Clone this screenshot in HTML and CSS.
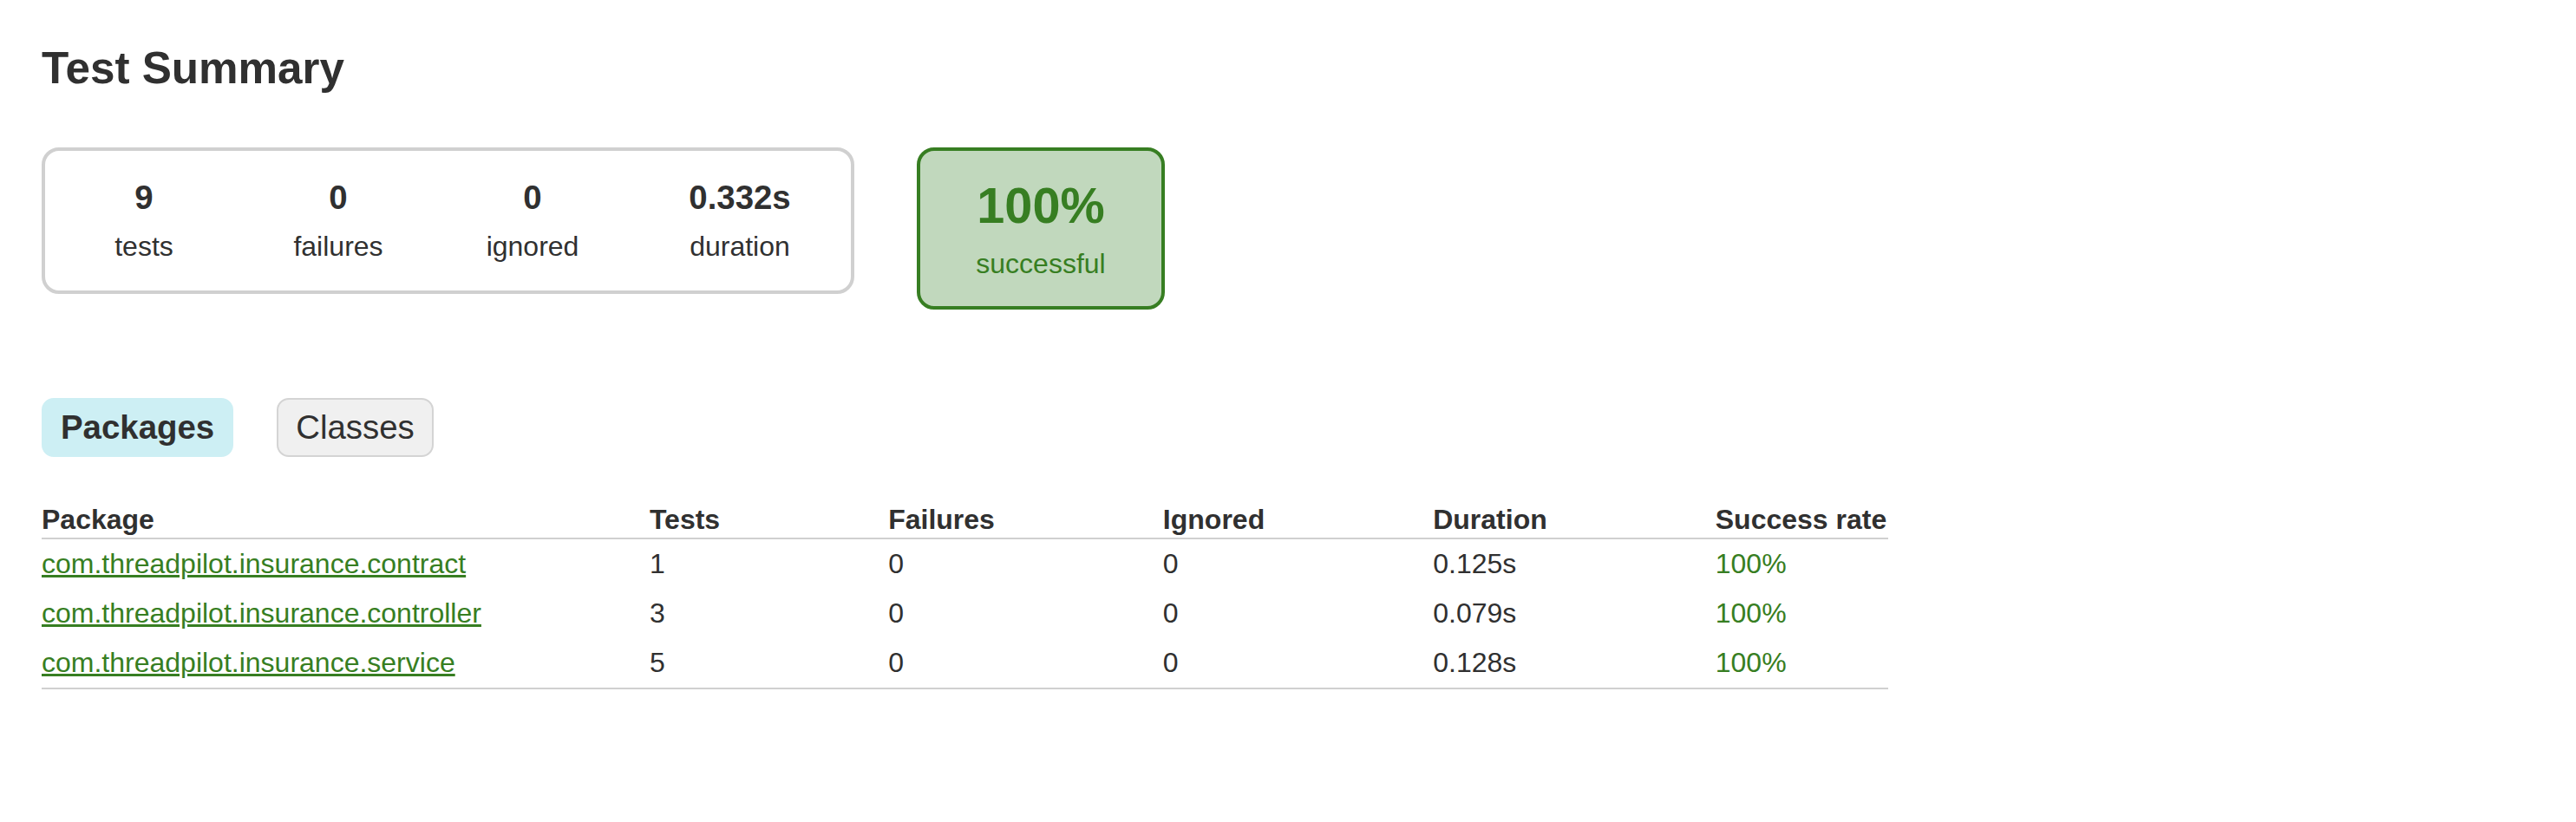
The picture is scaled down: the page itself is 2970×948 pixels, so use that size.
FILE: index.html
```html
<!DOCTYPE html>
<html lang="en">
<head>
<meta charset="utf-8">
<title>Test results - Test Summary</title>
<link rel="stylesheet" href="styles.css">
</head>
<body>
<div class="content">
  <h1 class="title">Test Summary</h1>
  <div class="summary">
    <div class="summary-group">
      <div class="info-box">
        <div class="counter">9</div>
        <p class="label">tests</p>
      </div>
      <div class="info-box">
        <div class="counter">0</div>
        <p class="label">failures</p>
      </div>
      <div class="info-box">
        <div class="counter">0</div>
        <p class="label">ignored</p>
      </div>
      <div class="info-box info-box-duration">
        <div class="counter">0.332s</div>
        <p class="label">duration</p>
      </div>
    </div>
    <div class="success-rate">
      <div class="percent">100%</div>
      <p class="label">successful</p>
    </div>
  </div>
  <ul class="tab-links">
    <li class="tab-link tab-link-selected"><a class="tab-anchor" href="#tab0">Packages</a></li>
    <li class="tab-link"><a class="tab-anchor" href="#tab1">Classes</a></li>
  </ul>
  <table class="results">
    <thead>
      <tr>
        <th class="col-head">Package</th>
        <th class="col-head">Tests</th>
        <th class="col-head">Failures</th>
        <th class="col-head">Ignored</th>
        <th class="col-head">Duration</th>
        <th class="col-head">Success rate</th>
      </tr>
    </thead>
    <tbody>
      <tr>
        <td class="cell success"><a class="pkg-link" href="#">com.threadpilot.insurance.contract</a></td>
        <td class="cell">1</td>
        <td class="cell">0</td>
        <td class="cell">0</td>
        <td class="cell">0.125s</td>
        <td class="cell success">100%</td>
      </tr>
      <tr>
        <td class="cell success"><a class="pkg-link" href="#">com.threadpilot.insurance.controller</a></td>
        <td class="cell">3</td>
        <td class="cell">0</td>
        <td class="cell">0</td>
        <td class="cell">0.079s</td>
        <td class="cell success">100%</td>
      </tr>
      <tr>
        <td class="cell success"><a class="pkg-link" href="#">com.threadpilot.insurance.service</a></td>
        <td class="cell">5</td>
        <td class="cell">0</td>
        <td class="cell">0</td>
        <td class="cell">0.128s</td>
        <td class="cell success">100%</td>
      </tr>
    </tbody>
  </table>
</div>
</body>
</html>
```
FILE: styles.css
```css
html, body {
  margin: 0;
  padding: 0;
  background: #ffffff;
}

body {
  font-family: "Liberation Sans", Arial, Helvetica, sans-serif;
  font-size: 32px;
  color: #303030;
}

.content {
  padding: 0 48px 60px 48px;
}

.title {
  font-size: 51.2px;
  font-weight: bold;
  line-height: normal;
  margin: 49px 0 0 0;
  white-space: nowrap;
}

.summary {
  display: flex;
  align-items: flex-start;
  margin-top: 62px;
  margin-bottom: 82px;
}

.summary-group {
  display: flex;
  padding: 2px 1px 2px 2px;
  border: 4px solid #d0d0d0;
  border-radius: 20px;
}

.info-box {
  width: 220px;
  padding: 30px 2px;
  text-align: center;
}

.info-box-duration {
  width: 250px;
}

.counter {
  font-size: 38.4px;
  font-weight: bold;
  line-height: normal;
  margin-bottom: 16px;
}

.label {
  margin: 0;
  line-height: normal;
}

.success-rate {
  box-sizing: border-box;
  width: 286px;
  margin-left: 72px;
  padding: 30px 0;
  text-align: center;
  border: 4px solid #377e22;
  border-radius: 20px;
  background-color: #c1d8bd;
  color: #377e22;
}

.percent {
  font-size: 57.6px;
  font-weight: bold;
  line-height: normal;
  margin-bottom: 16px;
}

.tab-links {
  display: flex;
  gap: 50px;
  list-style: none;
  margin: 0 0 32px 0;
  padding: 20px 0;
}

.tab-link {
  padding: 10px 20px;
  border: 2px solid #d4d4d4;
  border-radius: 14px;
  background-color: #f0f0f0;
}

.tab-link-selected {
  background-color: #cdeff4;
  border-color: #cdeff4;
  font-weight: bold;
}

.tab-anchor {
  display: block;
  font-size: 38.4px;
  line-height: normal;
  color: #303030;
  text-decoration: none;
}

.results {
  border-collapse: collapse;
  border-bottom: 2px solid #d0d0d0;
}

.col-head {
  text-align: left;
  white-space: nowrap;
  font-weight: bold;
  line-height: normal;
  padding: 2px 2px 2px 192px;
  border-bottom: 2px solid #d0d0d0;
}

.cell {
  white-space: nowrap;
  line-height: normal;
  padding: 10px 2px 10px 192px;
}

.col-head:first-child,
.cell:first-child {
  padding-left: 0;
}

.success,
.pkg-link {
  color: #377e22;
}

.pkg-link {
  text-decoration: underline;
}
```
